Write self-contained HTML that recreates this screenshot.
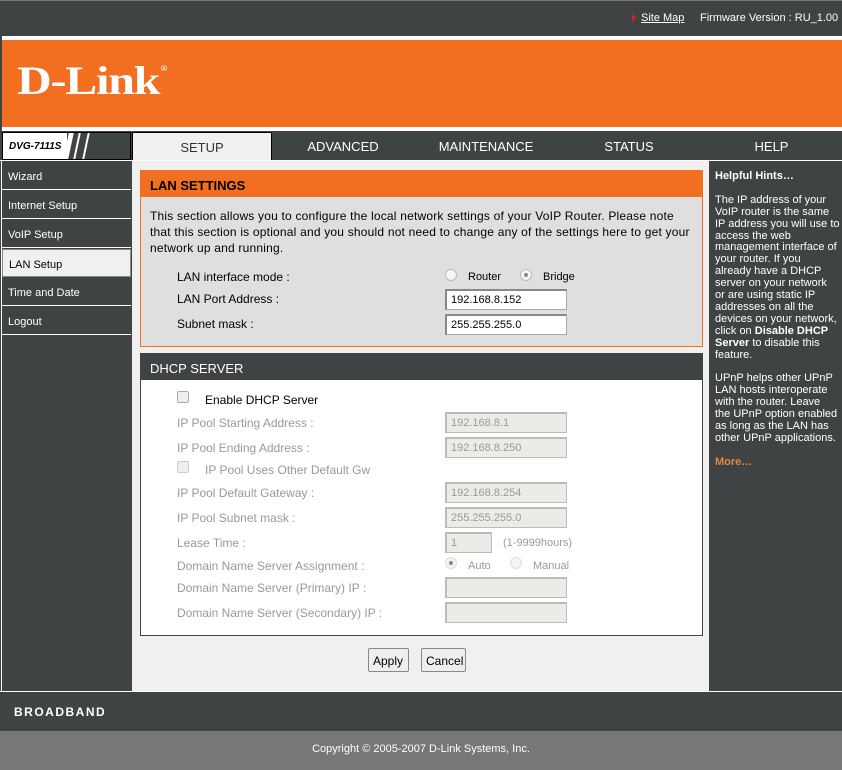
<!DOCTYPE html>
<html><head><style>
*{margin:0;padding:0;box-sizing:border-box}
body{width:842px;height:770px;background:#404344;font-family:"Liberation Sans",sans-serif;font-size:12px;position:relative;overflow:hidden}
.a{position:absolute}
.menu div{position:absolute;left:2px;width:129px;height:28px;color:#fff;padding:9px 0 0 6px;font-size:11px;background:#404344;border-bottom:1px solid #fff}
.tab{position:absolute;top:132px;height:28px;background:#404344;color:#fff;text-align:center;font-size:13px;padding-top:7px}
.lbl{position:absolute;left:177px;font-size:12px}
.in{position:absolute;left:445px;width:122px;height:21px;background:#fff;border:1px solid #aaa;border-top:2px solid #888;border-left:2px solid #888;font-size:11px;padding:3px 0 0 4px}
.dis{background:#ecebe6;color:#999;border-color:#bbb}
.g{color:#999}
.rad{position:absolute;width:12px;height:12px;border-radius:50%;border:1px solid #bbb;background:#f4f4f4}
.rad.on::after{content:"";position:absolute;left:3px;top:3px;width:4px;height:4px;border-radius:50%;background:#888}
.cb{position:absolute;left:177px;width:12px;height:12px;border:1px solid #aaa;border-radius:2px;background:#eee}
.btn{position:absolute;top:648px;height:24px;border:1px solid #888;border-radius:2px;background:#eee;font-size:12px;padding:5px 4px 0}
</style></head><body>
<div class="a" style="left:0;top:0;width:842px;height:1px;background:#777"></div>
<div class="a" style="left:632px;top:14px;width:0;height:0;border-left:4px solid #d22;border-top:4px solid transparent;border-bottom:4px solid transparent"></div>
<div class="a" style="left:641px;top:12px;color:#fff;font-size:11px"><u>Site Map</u></div>
<div class="a" style="left:700px;top:12px;color:#fff;font-size:11px">Firmware Version : RU_1.00</div>
<div class="a" style="left:2px;top:36px;width:840px;height:95px;background:#fff"></div>
<div class="a" style="left:2px;top:40px;width:840px;height:87px;background:#f26f21"></div>
<div class="a" style="left:17px;top:59px;color:#fff;font-family:'Liberation Serif',serif;font-weight:bold;font-size:40px;letter-spacing:-1px;transform:scaleX(1.2);transform-origin:0 0;line-height:44px">D-Link<span style="font-size:8px;vertical-align:top;margin-left:1px;line-height:20px">®</span></div>
<div class="a" style="left:2px;top:132px;width:129px;height:28px;background:#404344;border:1px solid #000"></div>
<div class="a" style="left:3px;top:133px;width:64px;height:26px;background:#fff;font-style:italic;font-weight:bold;font-size:10px;padding:8px 0 0 6px;white-space:nowrap">DVG-7111S</div>
<div class="a" style="left:66px;top:133px;width:0;height:26px;border-left:5px solid #fff;transform:skewX(-12deg)"></div>
<div class="a" style="left:76px;top:133px;width:2px;height:26px;background:#fff;transform:skewX(-12deg)"></div>
<div class="a" style="left:85px;top:133px;width:2px;height:26px;background:#fff;transform:skewX(-12deg)"></div>
<div class="tab" style="left:132px;width:140px;background:#f0f0f0;color:#333;border:1px solid #000;border-bottom:none;height:29px">SETUP</div>
<div class="tab" style="left:273px;width:140px">ADVANCED</div>
<div class="tab" style="left:415px;width:142px">MAINTENANCE</div>
<div class="tab" style="left:559px;width:140px">STATUS</div>
<div class="tab" style="left:701px;width:141px">HELP</div>
<div class="a" style="left:0;top:160px;width:842px;height:1px;background:#fff"></div>
<div class="menu">
<div style="top:162px">Wizard</div>
<div style="top:191px">Internet Setup</div>
<div style="top:220px">VoIP Setup</div>
<div style="top:249px;background:#f0f0f0;color:#000;border:1px solid #888">LAN Setup</div>
<div style="top:278px">Time and Date</div>
<div style="top:307px">Logout</div>
</div>
<div class="a" style="left:1px;top:160px;width:1px;height:532px;background:#fff"></div>
<div class="a" style="left:132px;top:161px;width:577px;height:530px;background:#f0f0f0"></div>
<div class="a" style="left:140px;top:170px;width:563px;height:177px;background:#dfdfdf;border:1px solid #f26f21"></div>
<div class="a" style="left:140px;top:170px;width:563px;height:27px;background:#f26f21;font-weight:bold;font-size:13px;padding:8px 0 0 10px">LAN SETTINGS</div>
<div class="a" style="left:150px;top:208px;width:545px;line-height:16px;font-size:12px;letter-spacing:0.2px">This section allows you to configure the local network settings of your VoIP Router. Please note that this section is optional and you should not need to change any of the settings here to get your network up and running.</div>
<div class="lbl" style="top:270px">LAN interface mode :</div>
<div class="rad" style="left:445px;top:269px"></div><div class="a" style="left:468px;top:271px;font-size:11px">Router</div>
<div class="rad on" style="left:520px;top:269px"></div><div class="a" style="left:543px;top:271px;font-size:11px">Bridge</div>
<div class="lbl" style="top:292px">LAN Port Address :</div>
<div class="in" style="top:289px">192.168.8.152</div>
<div class="lbl" style="top:317px">Subnet mask :</div>
<div class="in" style="top:314px">255.255.255.0</div>
<div class="a" style="left:140px;top:353px;width:563px;height:283px;background:#fff;border:1px solid #404344"></div>
<div class="a" style="left:140px;top:353px;width:563px;height:27px;background:#404344;color:#fff;font-size:13px;padding:8px 0 0 10px">DHCP SERVER</div>
<div class="cb" style="top:391px"></div><div class="a" style="left:205px;top:393px">Enable DHCP Server</div>
<div class="lbl g" style="top:416px">IP Pool Starting Address :</div><div class="in dis" style="top:412px">192.168.8.1</div>
<div class="lbl g" style="top:441px">IP Pool Ending Address :</div><div class="in dis" style="top:437px">192.168.8.250</div>
<div class="cb" style="top:461px;border-color:#ccc"></div><div class="a g" style="left:205px;top:463px">IP Pool Uses Other Default Gw</div>
<div class="lbl g" style="top:486px">IP Pool Default Gateway :</div><div class="in dis" style="top:482px">192.168.8.254</div>
<div class="lbl g" style="top:511px">IP Pool Subnet mask :</div><div class="in dis" style="top:507px">255.255.255.0</div>
<div class="lbl g" style="top:536px">Lease Time :</div><div class="in dis" style="top:532px;width:47px">1</div><div class="a g" style="left:503px;top:537px;font-size:11px">(1-9999hours)</div>
<div class="lbl g" style="top:559px">Domain Name Server Assignment :</div>
<div class="rad on" style="left:445px;top:557px;border-color:#ddd"></div><div class="a g" style="left:468px;top:560px;font-size:11px">Auto</div>
<div class="rad" style="left:510px;top:557px;border-color:#ddd"></div><div class="a g" style="left:533px;top:560px;font-size:11px">Manual</div>
<div class="lbl g" style="top:581px">Domain Name Server (Primary) IP :</div><div class="in dis" style="top:577px"></div>
<div class="lbl g" style="top:606px">Domain Name Server (Secondary) IP :</div><div class="in dis" style="top:602px"></div>
<div class="btn" style="left:368px;width:41px">Apply</div>
<div class="btn" style="left:421px;width:45px">Cancel</div>
<div class="a" style="left:710px;top:162px;width:132px;color:#fff;font-size:11px;line-height:11.9px;padding:9px 0 0 5px;white-space:nowrap">
<b>Helpful Hints…</b><br><br>The IP address of your<br>VoIP router is the same<br>IP address you will use to<br>access the web<br>management interface of<br>your router. If you<br>already have a DHCP<br>server on your network<br>or are using static IP<br>addresses on all the<br>devices on your network,<br>click on <b>Disable DHCP</b><br><b>Server</b> to disable this<br>feature.<br><br>UPnP helps other UPnP<br>LAN hosts interoperate<br>with the router. Leave<br>the UPnP option enabled<br>as long as the LAN has<br>other UPnP applications.<br><br><b style="color:#e0893f">More…</b></div>
<div class="a" style="left:0;top:691px;width:842px;height:1px;background:#fff"></div>
<div class="a" style="left:14px;top:705px;color:#fff;font-weight:bold;font-size:12px;letter-spacing:1.5px">BROADBAND</div>
<div class="a" style="left:0;top:731px;width:842px;height:39px;background:#777;color:#fff;text-align:center;font-size:11px;padding-top:12px">Copyright © 2005-2007 D-Link Systems, Inc.</div>
</body></html>
